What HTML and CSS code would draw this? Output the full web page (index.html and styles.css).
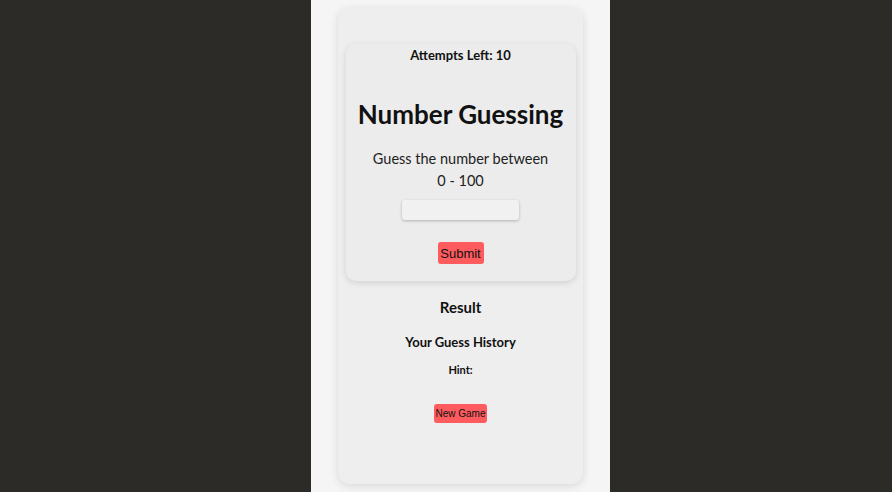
FILE: index.html
```html
<!DOCTYPE html>
<html>
<head>
<meta charset="utf-8">
<link rel="stylesheet" href="styles.css">
</head>
<body>
<div class="frame">
  <div class="card">
    <div class="game">
      <h3 class="attempts">Attempts Left: 10</h3>
      <h1 class="title">Number Guessing</h1>
      <p class="prompt">Guess the number between<br>0 - 100</p>
      <input class="guess" type="text">
      <button class="submit">Submit</button>
    </div>
    <h2 class="result">Result</h2>
    <h3 class="history">Your Guess History</h3>
    <h4 class="hint">Hint:</h4>
    <button class="newgame">New Game</button>
  </div>
</div>
</body>
</html>
```
FILE: styles.css
```css
html, body {
  margin: 0;
  padding: 0;
  height: 100%;
}
body {
  background: #2c2b28;
  display: flex;
  justify-content: center;
  padding-left: 29px;
  box-sizing: border-box;
  font-family: Lato, "Open Sans", sans-serif;
  color: #111;
}
.frame {
  width: 299px;
  background: #f5f5f5;
  height: 492px;
  padding-top: 8px;
  box-sizing: border-box;
  display: flex;
  justify-content: center;
}
.card {
  width: 245px;
  height: 476px;
  background: #eeeeee;
  border-radius: 12px;
  box-shadow: 0 2px 8px rgba(0,0,0,0.12);
  display: flex;
  flex-direction: column;
  align-items: center;
  padding-top: 36px;
  box-sizing: border-box;
}
.game {
  width: 230px;
  height: 237px;
  background: #ececec;
  border-radius: 10px;
  box-shadow: 0 2px 6px rgba(0,0,0,0.12);
  display: flex;
  flex-direction: column;
  align-items: center;
  box-sizing: border-box;
}
.attempts {
  margin: 2px 0 0;
  font-size: 13px;
  font-weight: 700;
  line-height: 18px;
}
.title {
  margin: 34px 0 0;
  font-size: 26px;
  font-weight: 700;
  line-height: 32px;
  white-space: nowrap;
}
.prompt {
  margin: 18px 0 0;
  font-size: 14.5px;
  font-weight: 400;
  line-height: 22px;
  text-align: center;
  color: #222;
}
.guess {
  margin-top: 8px;
  width: 117px;
  height: 20px;
  box-sizing: border-box;
  border: none;
  border-radius: 3px;
  background: #f1f1f1;
  box-shadow: 0 1px 3px rgba(0,0,0,0.25);
}
.submit {
  margin-top: 22px;
  width: 46px;
  height: 22px;
  border: none;
  border-radius: 3px;
  background: #fe5b5f;
  color: #111;
  font-family: "Liberation Sans", Arial, sans-serif;
  font-size: 13px;
  padding: 0;
}
.result {
  margin: 15px 0 0;
  font-size: 15px;
  font-weight: 700;
  line-height: 22px;
}
.history {
  margin: 15px 0 0;
  font-size: 13px;
  font-weight: 700;
  line-height: 18px;
}
.hint {
  margin: 12px 0 0;
  font-size: 11px;
  font-weight: 700;
  line-height: 14px;
}
.newgame {
  margin-top: 27px;
  width: 53px;
  height: 19px;
  border: none;
  border-radius: 3px;
  background: #fe5b5f;
  color: #111;
  font-family: "Liberation Sans", Arial, sans-serif;
  font-size: 10px;
  padding: 0;
}
```
